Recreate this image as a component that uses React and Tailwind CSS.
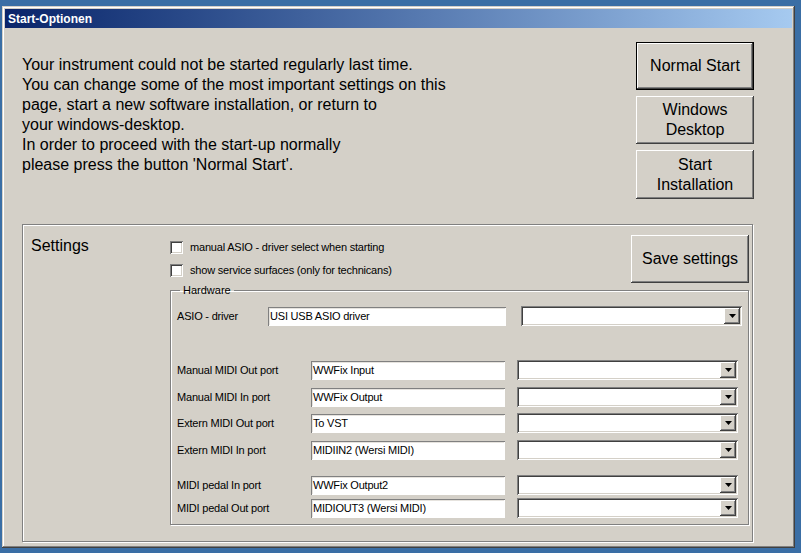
const raised =
  "shadow-[inset_-1px_-1px_0_#404040,inset_1px_1px_0_#ffffff,inset_-2px_-2px_0_#808080,inset_2px_2px_0_#d4d0c8]";
const sunken =
  "shadow-[inset_1px_1px_0_#808080,inset_-1px_-1px_0_#ffffff,inset_2px_2px_0_#404040,inset_-2px_-2px_0_#d4d0c8]";
const etched = "border border-[#808080] shadow-[inset_1px_1px_0_#ffffff,1px_1px_0_#ffffff]";

function WinButton({ children, isDefault, className = "" }) {
  return (
    <button
      type="button"
      className={
        "flex flex-col items-center justify-center bg-[#d4d0c8] text-[16px] leading-[20px] text-black " +
        (isDefault ? "border border-black " : "") +
        raised +
        " " +
        className
      }
    >
      {children}
    </button>
  );
}

function Checkbox({ label }) {
  return (
    <label className="flex items-center gap-[7px] text-[11px] leading-[13px] tracking-[-0.2px] text-black">
      <span className={"h-[13px] w-[13px] bg-white " + sunken} />
      <span>{label}</span>
    </label>
  );
}

function TextField({ value, width }) {
  return (
    <div
      className={
        "flex h-[19px] shrink-0 items-center bg-white px-[2px] text-[11px] tracking-[-0.2px] text-black shadow-[inset_1px_1px_0_#808080,inset_-1px_-1px_0_#ffffff,inset_2px_2px_0_#e6e3de] " +
        width
      }
    >
      {value}
    </div>
  );
}

function Combo({ width }) {
  return (
    <div className={"flex h-[20px] shrink-0 items-center justify-end bg-white p-[2px] " + sunken + " " + width}>
      <div className={"flex h-[16px] w-[16px] items-center justify-center bg-[#d4d0c8] " + raised}>
        <svg width="7" height="4" viewBox="0 0 7 4">
          <path d="M0 0h7L3.5 4z" fill="#000" />
        </svg>
      </div>
    </div>
  );
}

function PortRow({ label, value, className = "" }) {
  return (
    <div className={"flex items-center " + className}>
      <span className="w-[134px] shrink-0 text-[11px] leading-[13px] tracking-[-0.2px] text-black">{label}</span>
      <TextField value={value} width="w-[194px]" />
      <div className="w-[12px] shrink-0" />
      <Combo width="w-[221px]" />
    </div>
  );
}

export default function App() {
  return (
    <div
      className="h-[553px] w-[801px] bg-[#3a6ea5] pl-[2px] pt-[6px]"
      style={{ fontFamily: '"Liberation Sans", Arial, sans-serif' }}
    >
      <div
        className={
          "flex h-[542px] w-[793px] flex-col bg-[#d4d0c8] p-[3px] shadow-[inset_-1px_-1px_0_#404040,inset_1px_1px_0_#d4d0c8,inset_-2px_-2px_0_#808080,inset_2px_2px_0_#ffffff]"
        }
      >
        <div className="flex h-[19px] items-center bg-gradient-to-r from-[#0a246a] to-[#a6caf0] pl-[3px] text-[12px] font-bold text-white">
          Start-Optionen
        </div>

        <div className="flex flex-col pl-[17px]">
          <div className="flex">
            <div className="pt-[27px] text-[16px] leading-[20px] text-black">
              <p>Your instrument could not be started regularly last time.</p>
              <p>You can change some of the most important settings on this</p>
              <p>page, start a new software installation, or return to</p>
              <p>your windows-desktop.</p>
              <p>In order to proceed with the start-up normally</p>
              <p>please press the button 'Normal Start'.</p>
            </div>
            <div className="ml-auto mr-[38px] flex flex-col gap-[6px] pt-[14px]">
              <WinButton isDefault className="h-[48px] w-[118px]">
                Normal Start
              </WinButton>
              <WinButton className="h-[48px] w-[118px]">
                <span>Windows</span>
                <span>Desktop</span>
              </WinButton>
              <WinButton className="h-[49px] w-[118px]">
                <span>Start</span>
                <span>Installation</span>
              </WinButton>
            </div>
          </div>

          <div className={"mt-[25px] flex h-[318px] w-[731px] " + etched}>
            <div className="w-[147px] shrink-0 pl-[8px] pt-[11px] text-[16px] leading-[20px] text-black">Settings</div>
            <div className="flex min-w-0 flex-1 flex-col">
              <div className="flex">
                <div className="flex flex-col gap-[10px] pt-[16px]">
                  <Checkbox label="manual ASIO - driver select when starting" />
                  <Checkbox label="show service surfaces (only for technicans)" />
                </div>
                <WinButton className="ml-auto mr-[3px] mt-[10px] h-[48px] w-[118px]">Save settings</WinButton>
              </div>

              <fieldset className={"mt-[1px] mr-[4px] h-[241px] px-[6px] pb-0 " + etched}>
                <legend className="ml-[3px] px-[3px] text-[11px] leading-[13px] text-black">Hardware</legend>
                <div className="mt-[9px] flex items-center">
                  <span className="w-[91px] shrink-0 text-[11px] leading-[13px] tracking-[-0.2px] text-black">
                    ASIO - driver
                  </span>
                  <TextField value="USI USB ASIO driver" width="w-[238px]" />
                  <div className="w-[15px] shrink-0" />
                  <Combo width="w-[221px]" />
                </div>
                <PortRow className="mt-[34px]" label="Manual MIDI Out port" value="WWFix Input" />
                <PortRow className="mt-[7px]" label="Manual MIDI In port" value="WWFix Output" />
                <PortRow className="mt-[6px]" label="Extern MIDI Out port" value="To VST" />
                <PortRow className="mt-[7px]" label="Extern MIDI In port" value="MIDIIN2 (Wersi MIDI)" />
                <PortRow className="mt-[15px]" label="MIDI pedal In port" value="WWFix Output2" />
                <PortRow className="mt-[3px]" label="MIDI pedal Out port" value="MIDIOUT3 (Wersi MIDI)" />
              </fieldset>
            </div>
          </div>
        </div>
      </div>
    </div>
  );
}
